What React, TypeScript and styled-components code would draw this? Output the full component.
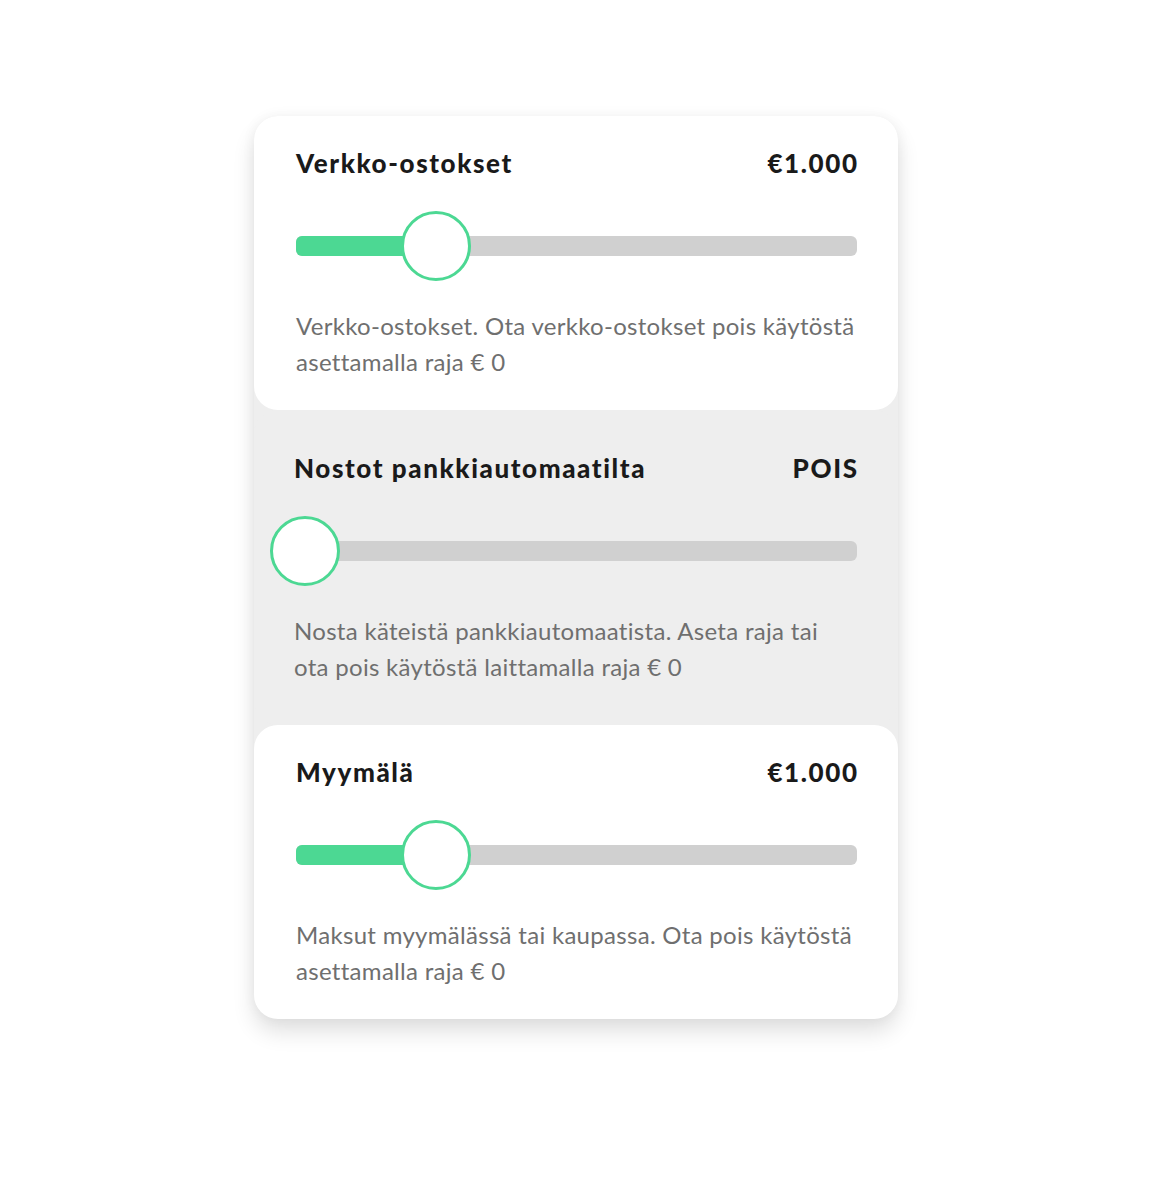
import styled, { createGlobalStyle } from 'styled-components';

interface Limit {
  title: string,
  value: string,
  fill: number,
  thumb: number,
  lines: string[],
  muted?: boolean,
}

const limits: Limit[] = [
  {
    title: 'Verkko-ostokset',
    value: '€1.000',
    fill: 25,
    thumb: 25,
    lines: ['Verkko-ostokset. Ota verkko-ostokset pois käytöstä', 'asettamalla raja € 0'],
  },
  {
    title: 'Nostot pankkiautomaatilta',
    value: 'POIS',
    fill: 0,
    thumb: 2,
    lines: ['Nosta käteistä pankkiautomaatista. Aseta raja tai', 'ota pois käytöstä laittamalla raja € 0'],
    muted: true,
  },
  {
    title: 'Myymälä',
    value: '€1.000',
    fill: 25,
    thumb: 25,
    lines: ['Maksut myymälässä tai kaupassa. Ota pois käytöstä', 'asettamalla raja € 0'],
  },
];

const Slider = ({ fill, thumb }: { fill: number, thumb: number }) => (
  <SliderWrap>
    <Track>
      <Fill style={{ width: `${fill}%` }} />
      <Thumb style={{ left: `${thumb}%` }} />
    </Track>
  </SliderWrap>
)

const App = () => {
  return (
    <Page>
      <GlobalStyle />
      <Card>
        {limits.map((l) => (
          <Section key={l.title} $muted={l.muted}>
            <Header>
              <Title>{l.title}</Title>
              <Title>{l.value}</Title>
            </Header>
            <Slider fill={l.fill} thumb={l.thumb} />
            <Description>
              {l.lines.map((line) => <Line key={line}>{line}</Line>)}
            </Description>
          </Section>
        ))}
      </Card>
    </Page>
  )
}

export default App

const GlobalStyle = createGlobalStyle`
  body {
    margin: 0;
    background: #ffffff;
    font-family: Lato, "Open Sans", sans-serif;
  }
`
const Page = styled.div`
  display: flex;
  justify-content: center;
  padding-top: 116px;
  height: 1200px;
  box-sizing: border-box;
`
const Card = styled.div`
  width: 644px;
  height: 902px;
  background: #eeeeee;
  border-radius: 24px;
  box-shadow: 0 14px 22px rgba(0,0,0,0.12), 0 0 14px rgba(0,0,0,0.05);
  display: flex;
  flex-direction: column;
`
const Section = styled.div<{ $muted?: boolean }>`
  background: ${(p) => (p.$muted ? '#eeeeee' : '#ffffff')};
  border-radius: 24px;
  padding: ${(p) => (p.$muted ? '42px 41px 40px 40px' : '31px 41px 30px 42px')};
  display: flex;
  flex-direction: column;
`
const Header = styled.div`
  display: flex;
  justify-content: space-between;
  align-items: center;
  height: 32px;
`
const Title = styled.span`
  font-size: 26px;
  font-weight: 900;
  letter-spacing: 1.6px;
  margin-right: -1.6px;
  color: #1a1a1a;
`
const SliderWrap = styled.div`
  height: 70px;
  margin-top: 32px;
  display: flex;
  align-items: center;
`
const Track = styled.div`
  position: relative;
  width: 100%;
  height: 20px;
  border-radius: 6px;
  background: #d0d0d0;
`
const Fill = styled.div`
  height: 100%;
  border-radius: 6px 0 0 6px;
  background: #4cd893;
`
const Thumb = styled.div`
  position: absolute;
  top: 50%;
  width: 70px;
  height: 70px;
  box-sizing: border-box;
  border: 3px solid #4cd893;
  border-radius: 50%;
  background: #ffffff;
  transform: translate(-50%, -50%);
`
const Description = styled.div`
  margin-top: 27px;
  margin-right: -6px;
  display: flex;
  flex-direction: column;
`
const Line = styled.span`
  font-size: 24px;
  letter-spacing: 0.3px;
  line-height: 36px;
  color: #6f6f6f;
  white-space: nowrap;
`
